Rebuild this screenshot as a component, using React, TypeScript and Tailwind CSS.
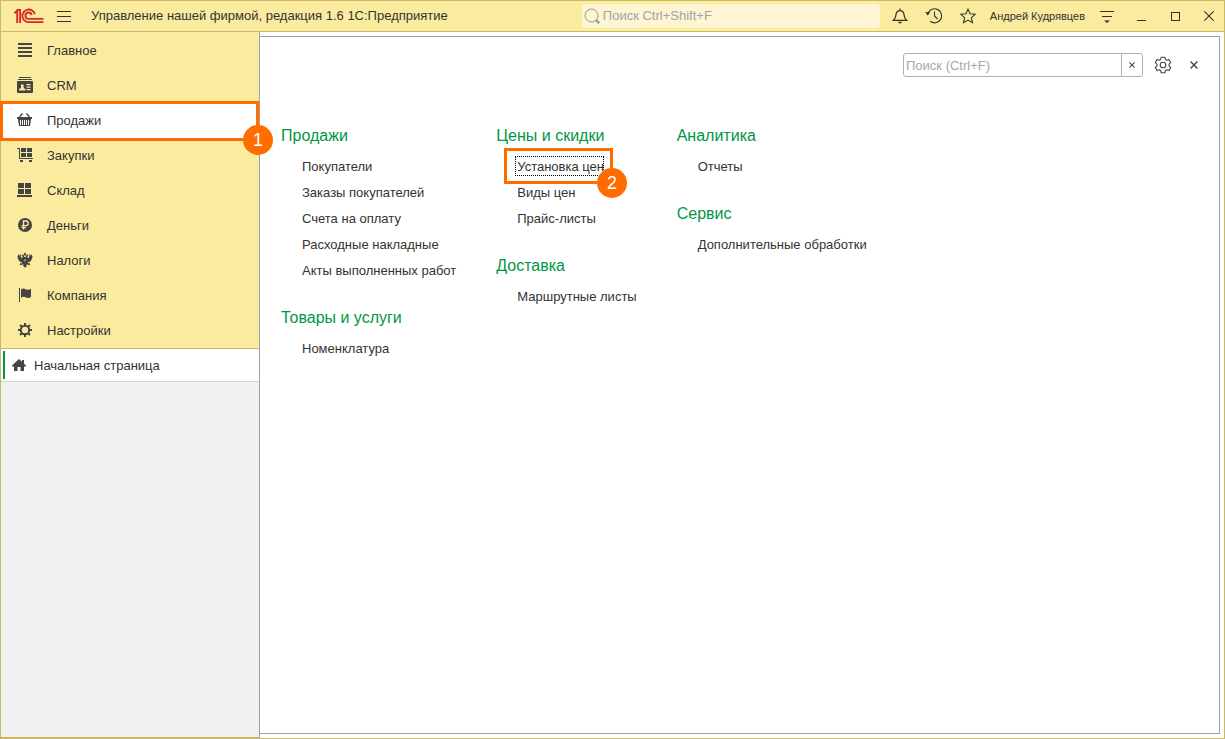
import React from 'react';

type IconProps = { className?: string };

interface Section {
  label: string;
  icon: React.FC<IconProps>;
  active?: boolean;
}

interface LinkGroup {
  title: string;
  links: string[];
}

const LogoIcon = () => (
  <svg width="30" height="16" viewBox="0 0 30 16" fill="none" stroke="#da2a26" strokeWidth="1.9">
    <path d="M0.3 5.2 3.2 2.4V15M2.6 1.9H6.1V15" />
    <path d="M20.8 6.3A6.3 6.3 0 1 0 14.6 14.1H29.5" />
    <path d="M17.7 7A3.2 3.2 0 1 0 14.6 10.9H29.5" />
  </svg>
);

const HamburgerIcon = () => (
  <svg width="14" height="11" viewBox="0 0 14 11" stroke="#333" shapeRendering="crispEdges">
    <path d="M0 .5H14M0 5.5H14M0 10.5H14" />
  </svg>
);

const SearchIcon = () => (
  <svg width="17" height="17" viewBox="0 0 17 17" fill="none" stroke="#9a9a94">
    <circle cx="7.5" cy="7.5" r="6.5" />
    <path d="M12 12l3.2 3.2" strokeWidth="2.4" />
  </svg>
);

const BellIcon = () => (
  <svg width="16" height="16" viewBox="0 0 16 16" fill="none" stroke="#333" strokeWidth="1.2">
    <path d="M1.5 12.3C3.6 10.6 3.7 8.8 4.1 6 4.5 3.6 5.8 2.6 8 2.6S11.5 3.6 11.9 6C12.3 8.8 12.4 10.6 14.5 12.3Z" />
    <path d="M8 .6v2" />
    <path d="M5.5 13.8H10.5L8 15.8Z" fill="#333" stroke="none" />
  </svg>
);

const HistoryIcon = () => (
  <svg width="18" height="16" viewBox="0 0 18 16" fill="none" stroke="#333" strokeWidth="1.1">
    <path d="M2.8 6A7 7 0 1 1 5.2 13.3" />
    <path d="M9.5 3.5V8L12.5 11" />
    <path d="M.3 4 5.2 4.2 2.6 7.6Z" fill="#333" stroke="none" />
  </svg>
);

const StarIcon = () => (
  <svg width="16" height="16" viewBox="0 0 16 16" fill="none" stroke="#333" strokeWidth="1.1">
    <path d="M8 1.2 10.1 5.8 15.2 6.3 11.4 9.7 12.5 14.7 8 12.1 3.5 14.7 4.6 9.7 .8 6.3 5.9 5.8Z" />
  </svg>
);

const ServiceMenuIcon = () => (
  <svg width="14" height="14" viewBox="0 0 14 14" stroke="#333">
    <path d="M0 2.5H14M2 7.5H12" shapeRendering="crispEdges" />
    <path d="M4 11.5H10L7 14Z" fill="#333" stroke="none" />
  </svg>
);

const MinimizeIcon = () => (
  <svg width="10" height="10" viewBox="0 0 10 10" stroke="#333" shapeRendering="crispEdges">
    <path d="M1 9.5H10" />
  </svg>
);

const MaximizeIcon = () => (
  <svg width="10" height="10" viewBox="0 0 10 10" fill="none" stroke="#333" shapeRendering="crispEdges">
    <rect x="1.5" y="1.5" width="8" height="8" />
  </svg>
);

const CloseIcon = () => (
  <svg width="10" height="10" viewBox="0 0 10 10" stroke="#333" strokeWidth="1.1">
    <path d="M.3 .3 9.7 9.7M9.7 .3 .3 9.7" />
  </svg>
);

const SmallCloseIcon = ({ className }: IconProps) => (
  <svg className={className} viewBox="0 0 8 8" stroke="#444" strokeWidth="1.4">
    <path d="M.6 .6 7.4 7.4M7.4 .6 .6 7.4" />
  </svg>
);

const GearOutlineIcon = () => (
  <svg width="18" height="18" viewBox="0 0 18 18" fill="none" stroke="#444" strokeWidth="1.1" strokeLinejoin="round">
    <path d="M7.2 1.2H10.8L11.3 3.5 12.7 4.3 14.9 3.5 16.7 6.6 15 8.2V9.8L16.7 11.4 14.9 14.5 12.7 13.7 11.3 14.5 10.8 16.8H7.2L6.7 14.5 5.3 13.7 3.1 14.5 1.3 11.4 3 9.8V8.2L1.3 6.6 3.1 3.5 5.3 4.3 6.7 3.5Z" />
    <circle cx="9" cy="9" r="2.8" />
  </svg>
);

const MainIcon = ({ className }: IconProps) => (
  <svg className={className} viewBox="0 0 16 16" fill="#444" shapeRendering="crispEdges">
    <path d="M1 1h14v2H1zM1 5h14v2H1zM1 9h14v2H1zM1 13h14v2H1z" />
  </svg>
);

const CrmIcon = ({ className }: IconProps) => (
  <svg className={className} viewBox="0 0 16 16" fill="#444">
    <path d="M2 0h12v1H2zM1 2h14v1H1z" />
    <path
      fillRule="evenodd"
      d="M1 4h14q1 0 1 1v10q0 1-1 1H1q-1 0-1-1V5q0-1 1-1ZM2 13.5h6.5v-1.5L6.6 11V7.5H4V11L2 12ZM9.5 7v1.3h4V7ZM9.5 9.5v1.3h4V9.5ZM9.5 12v1.3h4V12Z"
    />
  </svg>
);

const SalesIcon = ({ className }: IconProps) => (
  <svg className={className} viewBox="0 0 16 16" fill="#444">
    <path d="M0 5h15v2H0z" />
    <path d="M1 7h13l-1 7H2Z" />
    <path d="M3.5 8v5M5.5 8v5M7.5 8v5M9.5 8v5M11.5 8v5" stroke="#fff" />
    <path d="M2.5 5 5.5 1.5M12.5 5 9.5 1.5" stroke="#444" strokeWidth="1.3" />
  </svg>
);

const PurchasesIcon = ({ className }: IconProps) => (
  <svg className={className} viewBox="0 0 16 16" fill="#444">
    <path d="M0 1h3v10h13v1H2V2H0z" />
    <path d="M4 1h5v4H4zM10 1h5v4h-5zM4 6h5v4H4zM10 6h5v4h-5z" />
    <path d="M3 13h3v2H3zM12 13h3v2h-3z" />
  </svg>
);

const WarehouseIcon = ({ className }: IconProps) => (
  <svg className={className} viewBox="0 0 16 16" fill="#444" shapeRendering="crispEdges">
    <path d="M1 1h6v5H1zM8 1h6v5H8zM1 7h6v5H1zM8 7h6v5H8zM0 13h15v2H0z" />
  </svg>
);

const MoneyIcon = ({ className }: IconProps) => (
  <svg className={className} viewBox="0 0 16 16" fill="none">
    <circle cx="8" cy="8" r="7" fill="#444" />
    <path d="M6.5 12.5V4H9A2.3 2.3 0 0 1 9 8.6H4.5M4.5 10.6H9" stroke="#fbeb9e" strokeWidth="1.3" />
  </svg>
);

const TaxesIcon = ({ className }: IconProps) => (
  <svg className={className} viewBox="0 0 16 16" fill="#444">
    <path d="M8 .5 9.2 2 8.8 3.5H7.2L6.8 2Z" />
    <path d="M4.3 3 6.5 2.6 7.3 5H8.7L9.5 2.6 11.7 3 10.5 4.2 10.7 6 12 5.5 12.8 1.5 13.6 3.5 15 2.2 14.8 4.3 16 4.5 14.8 6.2 15.3 7 13.9 8 14.2 9.2 12.7 9.3 12.6 10.3 11 9.9 11.3 11.3 13 11.5 13.3 13.2 11 12.7 9.6 12.3 9.8 14 8 15.7 6.2 14 6.4 12.3 5 12.7 2.7 13.2 3 11.5 4.7 11.3 5 9.9 3.4 10.3 3.3 9.3 1.8 9.2 2.1 8 .7 7 1.2 6.2 0 4.5 1.2 4.3 1 2.2 2.4 3.5 3.2 1.5 4 5.5 5.3 6 5.5 4.2Z" />
    <path d="M7 7h2v2L8 10 7 9Z" fill="#8c8460" />
  </svg>
);

const CompanyIcon = ({ className }: IconProps) => (
  <svg className={className} viewBox="0 0 16 16" fill="#444">
    <path d="M2 1h1v14H2z" />
    <path d="M4 2.5C6 1.2 7 1.3 8.500 2.200S12 3 14 1.800V10C12 11.300 10 11.200 8.500 10.300S6 9.500 4 10.800Z" />
  </svg>
);

const SettingsIcon = ({ className }: IconProps) => (
  <svg className={className} viewBox="0 0 16 16" fill="none" stroke="#444">
    <circle cx="8" cy="8" r="4.2" strokeWidth="2" />
    <path
      d="M8 1v2.5M8 12.5V15M1 8h2.5M12.5 8H15M3 3l1.8 1.8M11.2 11.2 13 13M13 3l-1.8 1.8M4.8 11.2 3 13"
      strokeWidth="2"
    />
  </svg>
);

const HomeIcon = () => (
  <svg width="14" height="14" viewBox="0 0 14 14" fill="#444">
    <path d="M7 0 0 6.5V7.5H2V12H5.5V8H8.5V12H12V7.5H14V6.5L12 4.7V1H10V2.8Z" />
  </svg>
);

const sections: Section[] = [
  { label: 'Главное', icon: MainIcon },
  { label: 'CRM', icon: CrmIcon },
  { label: 'Продажи', icon: SalesIcon, active: true },
  { label: 'Закупки', icon: PurchasesIcon },
  { label: 'Склад', icon: WarehouseIcon },
  { label: 'Деньги', icon: MoneyIcon },
  { label: 'Налоги', icon: TaxesIcon },
  { label: 'Компания', icon: CompanyIcon },
  { label: 'Настройки', icon: SettingsIcon }
];

const columns: LinkGroup[][] = [
  [
    {
      title: 'Продажи',
      links: [
        'Покупатели',
        'Заказы покупателей',
        'Счета на оплату',
        'Расходные накладные',
        'Акты выполненных работ'
      ]
    },
    { title: 'Товары и услуги', links: ['Номенклатура'] }
  ],
  [
    { title: 'Цены и скидки', links: ['Установка цен', 'Виды цен', 'Прайс-листы'] },
    { title: 'Доставка', links: ['Маршрутные листы'] }
  ],
  [
    { title: 'Аналитика', links: ['Отчеты'] },
    { title: 'Сервис', links: ['Дополнительные обработки'] }
  ]
];

const focusedLink = 'Установка цен';

// Orange frame with a numbered badge on its lower right corner
const StepMark = ({ step, className }: { step: number; className: string }) => (
  <span className={`pointer-events-none absolute z-10 border-[3px] border-[#ff6d00] ${className}`}>
    <span className="absolute -right-[17px] -bottom-[17px] flex size-[30px] items-center justify-center rounded-full bg-[#ff6d00] text-lg text-white">
      {step}
    </span>
  </span>
);

const TitleButton = ({ label, children }: { label: string; children: React.ReactNode }) => (
  <button aria-label={label} className="flex h-full w-[30px] shrink-0 items-center justify-center">
    {children}
  </button>
);

const TitleBar = () => (
  <header className="flex h-[31px] items-center border-b border-[#c9b865] bg-[#fbeb9e]">
    <div className="flex min-w-0 flex-1 items-center pl-[13px]">
      <LogoIcon />
      <button aria-label="Меню" className="ml-[13px] shrink-0">
        <HamburgerIcon />
      </button>
      <h1 className="ml-5 truncate">Управление нашей фирмой, редакция 1.6 1С:Предприятие</h1>
    </div>
    <label className="mr-[5px] flex h-6 w-[298px] items-center gap-[2px] rounded-sm bg-[#fdf5d3] pl-[2px]">
      <SearchIcon />
      <input
        type="text"
        aria-label="Поиск"
        placeholder="Поиск Ctrl+Shift+F"
        className="min-w-0 flex-1 bg-transparent outline-none placeholder:text-[#a3a3a0]"
      />
    </label>
    <div className="flex h-full items-center gap-1">
      <TitleButton label="Оповещения">
        <BellIcon />
      </TitleButton>
      <TitleButton label="История">
        <HistoryIcon />
      </TitleButton>
      <TitleButton label="Избранное">
        <StarIcon />
      </TitleButton>
      <button className="px-[3px] text-[11px] whitespace-nowrap">Андрей Кудрявцев</button>
      <TitleButton label="Сервис и настройки">
        <ServiceMenuIcon />
      </TitleButton>
      <TitleButton label="Свернуть">
        <MinimizeIcon />
      </TitleButton>
      <TitleButton label="Развернуть">
        <MaximizeIcon />
      </TitleButton>
      <TitleButton label="Закрыть">
        <CloseIcon />
      </TitleButton>
    </div>
  </header>
);

const Sidebar = () => (
  <aside className="flex w-[259px] shrink-0 flex-col border-r border-b border-r-[#a0a0a0] border-b-[#c9b865] bg-[#f1f1f1]">
    <nav className="border-b border-[#c9b865] bg-[#fbeb9e] pt-px">
      {sections.map(({ label, icon: Icon, active }) => (
        <button
          key={label}
          className={`relative flex h-[35px] w-full items-center gap-[14px] pl-4 text-left ${active ? 'bg-white' : ''}`}
        >
          <Icon className="mb-px size-4" />
          {label}
          {active && <StepMark step={1} className="-top-[2px] right-0 -bottom-[3px] -left-px" />}
        </button>
      ))}
    </nav>
    <button className="flex h-[33px] items-center border-b border-[#d4d4d4] bg-white py-[2px] pl-[2px] text-left">
      <span className="h-full w-[2px] bg-[#009646]" />
      <span className="ml-[7px] flex items-center gap-2 pt-px">
        <HomeIcon />
        Начальная страница
      </span>
    </button>
  </aside>
);

const CommandLink = ({ label }: { label: string }) => (
  <li className="flex h-[26px] items-center">
    {label === focusedLink ? (
      <a href="#" className="relative">
        {label}
        <span className="absolute -top-[2px] right-0 bottom-0 -left-[2px] border border-dotted border-black" />
        <StepMark step={2} className="-top-[10px] right-[-9px] -bottom-2 -left-[13px]" />
      </a>
    ) : (
      <a href="#">{label}</a>
    )}
  </li>
);

const App: React.FC = () => {
  return (
    <div className="flex min-h-screen flex-col border border-[#c9b865] bg-white font-['Liberation_Sans',Arial,sans-serif] text-[13px] leading-[18px] text-[#333]">
      <TitleBar />
      <div className="flex flex-1">
        <Sidebar />
        <main className="mt-1 mr-1 mb-1 flex-1 border border-l-0 border-[#a0a0a0] pt-4 pr-[17px] pl-[21px]">
          <div className="flex items-center justify-end">
            <div className="flex h-6 w-60 overflow-hidden rounded-[3px] border border-[#b0b0b0]">
              <input
                type="text"
                aria-label="Поиск по командам"
                placeholder="Поиск (Ctrl+F)"
                className="min-w-0 flex-1 px-[2px] pt-px outline-none placeholder:text-[#a6a6a6]"
              />
              <button
                aria-label="Очистить"
                className="flex w-[21px] items-center justify-center border-l border-[#b0b0b0]"
              >
                <SmallCloseIcon className="size-[6px]" />
              </button>
            </div>
            <button aria-label="Настройка" className="ml-[11px]">
              <GearOutlineIcon />
            </button>
            <button aria-label="Закрыть раздел" className="ml-[14px] p-1">
              <SmallCloseIcon className="size-2" />
            </button>
          </div>
          <div className="mt-[41px] flex gap-10">
            {columns.map((groups) => (
              <div key={groups[0].title} className="flex flex-col gap-4">
                {groups.map((group) => (
                  <section key={group.title}>
                    <h2 className="flex h-9 items-center text-base text-[#009646]">{group.title}</h2>
                    <ul className="pl-[21px] whitespace-nowrap">
                      {group.links.map((link) => (
                        <CommandLink key={link} label={link} />
                      ))}
                    </ul>
                  </section>
                ))}
              </div>
            ))}
          </div>
        </main>
      </div>
    </div>
  );
};

export default App;
